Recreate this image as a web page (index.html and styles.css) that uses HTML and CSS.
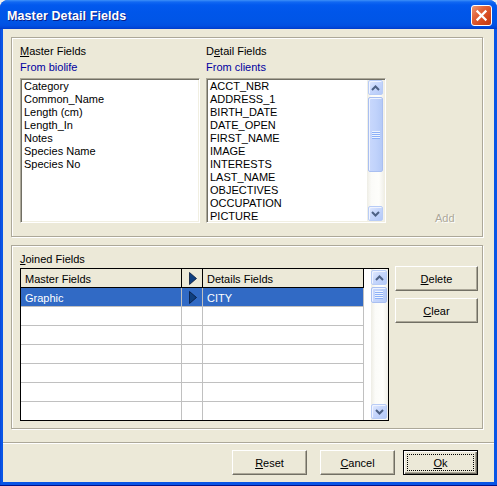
FILE: index.html
```html
<!DOCTYPE html>
<html>
<head>
<meta charset="utf-8">
<title>Master Detail Fields</title>
<link rel="stylesheet" href="styles.css">
</head>
<body>
<div class="window">
  <div class="titlebar">
    <span class="title">Master Detail Fields</span>
    <span class="close"><svg width="13" height="13" viewBox="0 0 13 13"><path d="M2.5 2.5 L10.5 10.5 M10.5 2.5 L2.5 10.5" stroke="#fff" stroke-width="2.3" stroke-linecap="square"/></svg></span>
  </div>
  <div class="client">
    <div class="groups">
      <div class="group g1">
        <div class="col">
          <div class="lbl"><u>M</u>aster Fields</div>
          <div class="sub">From biolife</div>
          <div class="listbox">
            <div class="items">
              <div>Category</div>
              <div>Common_Name</div>
              <div>Length (cm)</div>
              <div>Length_In</div>
              <div>Notes</div>
              <div>Species Name</div>
              <div>Species No</div>
            </div>
          </div>
        </div>
        <div class="col col-detail">
          <div class="lbl">D<u>e</u>tail Fields</div>
          <div class="sub">From clients</div>
          <div class="listbox">
            <div class="items">
              <div>ACCT_NBR</div>
              <div>ADDRESS_1</div>
              <div>BIRTH_DATE</div>
              <div>DATE_OPEN</div>
              <div>FIRST_NAME</div>
              <div>IMAGE</div>
              <div>INTERESTS</div>
              <div>LAST_NAME</div>
              <div>OBJECTIVES</div>
              <div>OCCUPATION</div>
              <div>PICTURE</div>
            </div>
            <div class="vscroll list-scroll">
              <div class="sb-btn"><svg width="9" height="6" viewBox="0 0 9 6"><path d="M1 5 L4.5 1.5 L8 5" fill="none" stroke="#4D6185" stroke-width="2"/></svg></div>
              <div class="sb-thumb thumb-list"><svg width="8" height="8" viewBox="0 0 8 8"><path d="M0 0.5H8M0 2.5H8M0 4.5H8M0 6.5H8" stroke="#EEF4FE" stroke-width="1"/><path d="M0 1.5H8M0 3.5H8M0 5.5H8M0 7.5H8" stroke="#8CB0F8" stroke-width="1"/></svg></div>
              <div class="sb-space"></div>
              <div class="sb-btn"><svg width="9" height="6" viewBox="0 0 9 6"><path d="M1 1 L4.5 4.5 L8 1" fill="none" stroke="#4D6185" stroke-width="2"/></svg></div>
            </div>
          </div>
        </div>
        <div class="addcol"><span class="add">Add</span></div>
      </div>

      <div class="group g2">
        <div class="joined">
          <div class="lbl"><u>J</u>oined Fields</div>
          <div class="grid">
            <div class="grid-body">
              <div class="row head">
                <div class="cell c1">Master Fields</div>
                <div class="cell c2"><svg width="8" height="13" viewBox="0 0 8 13"><polygon points="0.5,0.5 7.5,6.5 0.5,12.5" fill="#0F3F80" stroke="#06183A" stroke-width="0.8"/></svg></div>
                <div class="cell c3">Details Fields</div>
              </div>
              <div class="row sel">
                <div class="cell c1">Graphic</div>
                <div class="cell c2"><svg width="8" height="13" viewBox="0 0 8 13"><polygon points="0.5,0.5 7.5,6.5 0.5,12.5" fill="#0F3F80" stroke="#06183A" stroke-width="0.8"/></svg></div>
                <div class="cell c3">CITY</div>
              </div>
              <div class="row"><div class="cell c1"></div><div class="cell c2"></div><div class="cell c3"></div></div>
              <div class="row"><div class="cell c1"></div><div class="cell c2"></div><div class="cell c3"></div></div>
              <div class="row"><div class="cell c1"></div><div class="cell c2"></div><div class="cell c3"></div></div>
              <div class="row"><div class="cell c1"></div><div class="cell c2"></div><div class="cell c3"></div></div>
              <div class="row"><div class="cell c1"></div><div class="cell c2"></div><div class="cell c3"></div></div>
              <div class="row last"><div class="cell c1"></div><div class="cell c2"></div><div class="cell c3"></div></div>
            </div>
            <div class="grid-side">
              <div class="vscroll grid-scroll">
                <div class="sb-btn"><svg width="9" height="6" viewBox="0 0 9 6"><path d="M1 5 L4.5 1.5 L8 5" fill="none" stroke="#4D6185" stroke-width="2"/></svg></div>
                <div class="sb-thumb thumb-grid"><svg width="8" height="8" viewBox="0 0 8 8"><path d="M0 0.5H8M0 2.5H8M0 4.5H8M0 6.5H8" stroke="#EEF4FE" stroke-width="1"/><path d="M0 1.5H8M0 3.5H8M0 5.5H8M0 7.5H8" stroke="#8CB0F8" stroke-width="1"/></svg></div>
                <div class="sb-space"></div>
                <div class="sb-btn"><svg width="9" height="6" viewBox="0 0 9 6"><path d="M1 1 L4.5 4.5 L8 1" fill="none" stroke="#4D6185" stroke-width="2"/></svg></div>
              </div>
            </div>
          </div>
        </div>
        <div class="sidebtns">
          <div class="btn side"><u>D</u>elete</div>
          <div class="btn side clear"><u>C</u>lear</div>
        </div>
      </div>
    </div>
    <div class="sep"></div>
    <div class="footer">
      <div class="btn foot"><u>R</u>eset</div>
      <div class="btn foot cancel"><u>C</u>ancel</div>
      <div class="btn foot ok"><u>O</u>k</div>
    </div>
  </div>
</div>
</body>
</html>
```

FILE: styles.css
```css
* { box-sizing: border-box; }
html, body { margin: 0; padding: 0; }
body {
  width: 497px;
  height: 486px;
  overflow: hidden;
  background: #EFEFEF;
  font-family: "Liberation Sans", Arial, sans-serif;
  font-size: 11px;
  color: #000;
}
u { text-decoration: underline; text-underline-offset: 1px; }

.window {
  width: 497px;
  height: 486px;
  display: flex;
  flex-direction: column;
  background: linear-gradient(to right, #0A3FD0, #0855E6 1px, #0855E6 496px);
  border-radius: 8px 8px 0 0;
  overflow: hidden;
  box-shadow: inset 0 -1px 0 #00138C;
}

.titlebar {
  height: 29px;
  flex: none;
  display: flex;
  align-items: center;
  padding: 0 5px 0 7px;
  background: linear-gradient(#3D90F8 0, #1168F2 2px, #0259EE 5px, #0056EA 40%, #0055E6 75%, #0150E2 88%, #0045D6 96%, #0039C8 100%);
}
.title {
  flex: 1;
  color: #fff;
  font-weight: bold;
  font-size: 12.5px;
  padding-top: 2px;
  text-shadow: 1px 1px 0 #0A1D88;
  letter-spacing: 0.1px;
}
.close {
  width: 21px;
  height: 21px;
  margin-top: 1px;
  border: 1px solid #fff;
  border-radius: 3px;
  background: linear-gradient(135deg, #EB9A78 0%, #E2643A 35%, #D4471C 70%, #C23A12 100%);
  display: flex;
  align-items: center;
  justify-content: center;
}

.client {
  flex: 1;
  margin: 0 3px 4px 3px;
  background: #ECE9D8;
  display: flex;
  flex-direction: column;
}

.groups {
  padding: 8px 11px 0 8px;
}

.group {
  border: 1px solid #ACA899;
  box-shadow: inset 1px 1px 0 #fff, 1px 1px 0 #fff;
  display: flex;
}
.g1 {
  height: 200px;
  padding: 5px 0 0 8px;
}
.g2 {
  height: 184px;
  margin-top: 8px;
  padding: 0 0 0 8px;
}

.col { width: 180px; display: flex; flex-direction: column; }
.col-detail { margin-left: 6px; }
.lbl, .sub { line-height: 16px; height: 16px; white-space: nowrap; }
.sub { color: #0000A0; }

.listbox {
  margin-top: 3px;
  height: 145px;
  background: #fff;
  border: 1px solid;
  border-color: #ACA899 #fff #fff #ACA899;
  box-shadow: inset 1px 1px 0 #716F64, inset -1px -1px 0 #F1EFE2;
  padding: 1px;
  display: flex;
  overflow: hidden;
}
.items {
  flex: 1;
  padding-left: 2px;
  line-height: 13px;
  overflow: hidden;
  white-space: nowrap;
}

.vscroll {
  width: 17px;
  flex: none;
  display: flex;
  flex-direction: column;
  background: linear-gradient(to right, #EEEDE5, #FBFBF8 25%, #FEFEFB 70%, #F0EFE8);
}
.sb-btn {
  width: 15px;
  height: 15px;
  margin: 0 1px;
  flex: none;
  border: 1px solid #B8CCF6;
  border-radius: 2px;
  background: linear-gradient(135deg, #E2EAFE 0%, #C7D7FC 45%, #B4C9F8 100%);
  box-shadow: inset 1px 1px 0 #F0F4FF;
  display: flex;
  align-items: center;
  justify-content: center;
}
.sb-thumb {
  width: 15px;
  margin: 1px 1px 0;
  flex: none;
  border: 1px solid #A9BFF1;
  border-radius: 2px;
  background: linear-gradient(to right, #C9D8FC 0%, #C1D3FB 50%, #B5CAF7 100%);
  box-shadow: inset 1px 1px 0 #EEF3FF;
  display: flex;
  align-items: center;
  justify-content: center;
}
.thumb-list { height: 75px; margin-top: 2px; }
.thumb-grid { height: 16px; margin-top: 2px; }
.sb-space { flex: 1; }
.list-scroll .sb-btn:last-child { margin-bottom: 0; }

.addcol {
  flex: 1;
  display: flex;
  align-items: flex-end;
  padding-left: 49px;
}
.add {
  line-height: 13px;
  margin-bottom: 11px;
  color: #ACA899;
  text-shadow: 1px 1px 0 #fff;
}

.joined {
  padding-top: 5px;
  width: 369px;
  display: flex;
  flex-direction: column;
}
.joined .lbl { margin-bottom: 1px; }

.grid {
  width: 369px;
  height: 153px;
  border: 1px solid #000;
  background: #fff;
  display: flex;
}
.grid-body {
  width: 343px;
  display: flex;
  flex-direction: column;
}
.row {
  display: flex;
  height: 19px;
  border-bottom: 1px solid #C0C0C0;
}
.row.last { height: 18px; border-bottom: none; }
.row.head { background: #ECE9D8; border-bottom-color: #000; }
.row.sel { background: #316AC5; color: #fff; }
.cell {
  height: 18px;
  padding: 4px 0 0 4px;
  line-height: 13px;
  white-space: nowrap;
  overflow: hidden;
  border-right: 1px solid #C0C0C0;
}
.head .cell { border-right-color: #000; }
.c1 { width: 161px; }
.c2 { width: 21px; padding: 0 0 0 7px; display: flex; align-items: center; }
.c3 { width: 161px; }

.grid-side {
  flex: 1;
  display: flex;
  justify-content: flex-end;
  background: #fff;
}
.grid-scroll { width: 17px; }
.grid-scroll .sb-btn { width: 16px; margin: 0 1px 0 0; }
.grid-scroll .sb-btn:first-child { margin-top: 1px; }
.grid-scroll .sb-btn:last-child { margin-bottom: 1px; }
.grid-scroll .sb-thumb { width: 16px; margin-left: 0; margin-right: 1px; }

.sidebtns {
  margin-left: 6px;
  padding-top: 20px;
  display: flex;
  flex-direction: column;
}

.btn {
  height: 25px;
  display: flex;
  align-items: center;
  justify-content: center;
  padding-top: 1px;
  background: #ECE9D8;
  border: 1px solid;
  border-color: #fff #716F64 #716F64 #fff;
  box-shadow: inset -1px -1px 0 #ACA899;
  white-space: nowrap;
}
.side { width: 83px; }
.side.clear { margin-top: 7px; }

.sep {
  margin-top: 13px;
  border-top: 1px solid #ACA899;
  border-bottom: 1px solid #fff;
}

.footer {
  margin-top: 6px;
  display: flex;
  justify-content: flex-end;
  padding-right: 16px;
}
.foot { width: 75px; }
.foot.cancel { margin-left: 13px; }
.foot.ok {
  margin-left: 8px;
  border: 1px solid #000;
  box-shadow: inset 1px 1px 0 #fff, inset -1px -1px 0 #716F64, inset -2px -2px 0 #ACA899;
  outline: 1px dotted #000;
  outline-offset: -5px;
}
```
